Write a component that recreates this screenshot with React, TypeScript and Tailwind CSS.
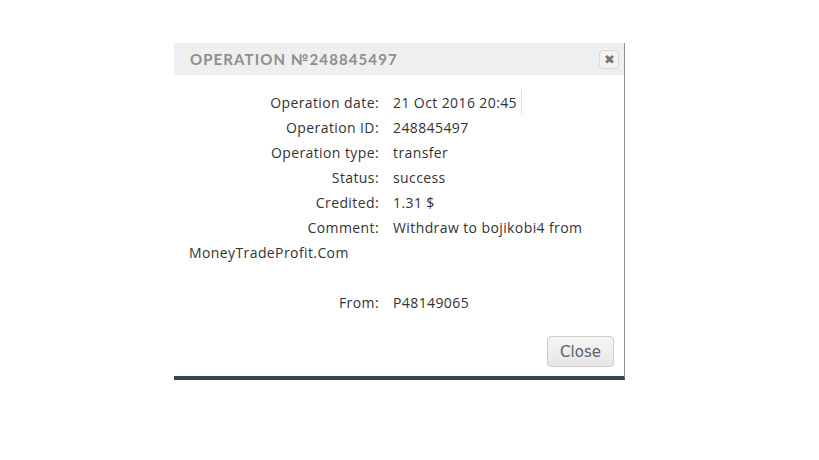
const rows: [string, string][] = [
  ["Operation ID:", "248845497"],
  ["Operation type:", "transfer"],
  ["Status:", "success"],
  ["Credited:", "1.31 $"],
];

export default function App() {
  return (
    <div className="w-[819px] h-[460px] bg-white relative" style={{ fontFamily: "'Open Sans', sans-serif" }}>
      <div className="absolute left-[174px] top-[43px] w-[451px] bg-white border-r border-[#8f8f8f] border-b-4 border-b-[#37474f]">
        {/* header */}
        <div className="h-[32px] bg-[#efefef] flex items-center justify-between pl-4 pr-[5px]">
          <span className="text-[15px] font-bold tracking-[1.1px] text-[#8e8e8e]" style={{ fontFamily: "Lato, sans-serif" }}>
            OPERATION №248845497
          </span>
          <button className="w-[20px] h-[19px] flex items-center justify-center rounded-[4px] border border-[#d8d8d8] bg-[#f3f3f3] text-[#777] text-[13px] leading-none">
            ✖
          </button>
        </div>

        {/* body */}
        <div className="px-[15px] pt-[15px] text-[14px] leading-[25px] tracking-[0.4px] text-[#333]">
          <div className="flex">
            <span className="w-[204px] text-right pr-[14px] shrink-0">Operation date:</span>
            <span className="pr-[4px] border-r border-[#cfe0f5]">21 Oct 2016 20:45</span>
          </div>
          {rows.map(([k, v]) => (
            <div key={k} className="flex">
              <span className="w-[204px] text-right pr-[14px] shrink-0">{k}</span>
              <span>{v}</span>
            </div>
          ))}
          <div className="flex">
            <span className="w-[204px] text-right pr-[14px] shrink-0">Comment:</span>
            <span>Withdraw to bojikobi4 from</span>
          </div>
          <div>MoneyTradeProfit.Com</div>
          <div className="h-[25px]" />
          <div className="flex">
            <span className="w-[204px] text-right pr-[14px] shrink-0">From:</span>
            <span>P48149065</span>
          </div>
        </div>

        {/* footer */}
        <div className="flex justify-end px-[10px] pt-[21px] pb-[9px]">
          <button
            className="h-[31px] w-[67px] rounded-[4px] border border-[#ccc] bg-gradient-to-b from-[#f5f5f5] to-[#e6e6e6] text-[15px] text-[#566270] pt-[2px]"
            style={{ fontFamily: "'DejaVu Sans', sans-serif" }}
          >
            Close
          </button>
        </div>
      </div>
    </div>
  );
}
